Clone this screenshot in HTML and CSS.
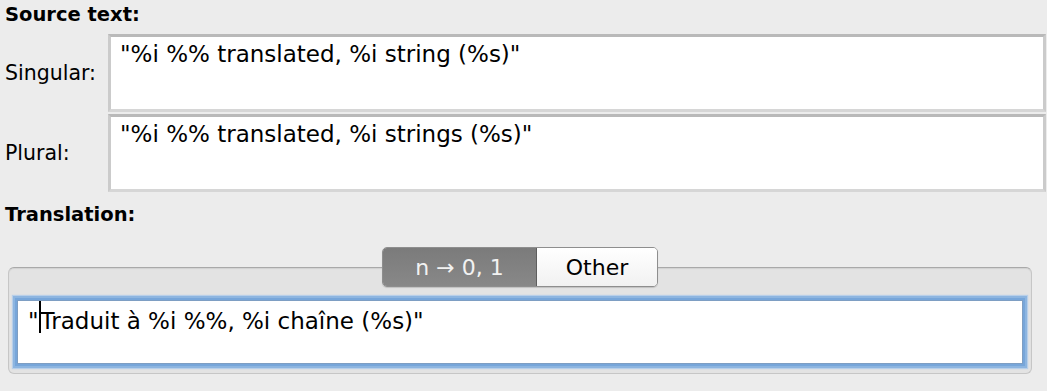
FILE: index.html
```html
<!DOCTYPE html>
<html lang="en">
<head>
  <meta charset="UTF-8">
  <title>Plural translation</title>
  <link rel="stylesheet" href="styles.css">
</head>
<body>
  <main class="editor">
    <div class="heading">Source text:</div>
    <div class="source-grid">
      <label class="row-label">Singular:</label>
      <div class="source-box">"%i %% translated, %i string (%s)"</div>
      <label class="row-label">Plural:</label>
      <div class="source-box">"%i %% translated, %i strings (%s)"</div>
    </div>

    <div class="heading heading-translation">Translation:</div>
    <div class="group">
      <div class="segments">
        <button class="segment selected">n → 0, 1</button>
        <button class="segment">Other</button>
      </div>
      <div class="target-field">
        <span>"</span><span class="caret"></span><span>Traduit à %i %%, %i chaîne (%s)"</span>
      </div>
    </div>
  </main>
</body>
</html>
```

FILE: styles.css
```css
body {
  margin: 0;
  background-color: #ececec;
  font-family: 'DejaVu Sans', sans-serif;
  color: #000;
}

.editor {
  display: flex;
  flex-direction: column;
  padding-top: 3px;
}

.heading {
  font-weight: bold;
  font-size: 19.5px;
  line-height: 24px;
  padding-left: 5px;
}

.heading-translation {
  margin-top: 11px;
}

.source-grid {
  display: grid;
  grid-template-columns: 108px 1fr;
  grid-auto-rows: 78px;
  row-gap: 2px;
  margin-top: 7px;
  padding-right: 1px;
}

.row-label {
  font-size: 20.5px;
  padding-left: 5px;
  align-self: center;
}

.source-box {
  background: #fff;
  border: 3px solid #cbcbcb;
  border-top-color: #b9b9b9;
  border-bottom-color: #d6d6d6;
  font-size: 23px;
  padding: 4px 9px;
}

.group {
  display: flex;
  flex-direction: column;
  align-items: center;
  margin: 40px 15px 0 8px;
  background: #e3e3e3;
  border: 1px solid #c6c6c6;
  border-top-color: #a9a9a9;
  border-radius: 6px;
  box-shadow: inset 0 1px 1px rgba(0, 0, 0, 0.08);
  height: 105px;
}

.segments {
  display: flex;
  margin-top: -21px;
  border: 1px solid #8e8e8e;
  border-radius: 5px;
  overflow: hidden;
  box-shadow: 0 1px 1px rgba(0, 0, 0, 0.15);
}

.segment {
  font-family: inherit;
  font-size: 22px;
  height: 38px;
  width: 120px;
  border: 0;
  padding: 0;
  background: linear-gradient(#ffffff, #f1f1f1);
  color: #000;
}

.segment.selected {
  width: 154px;
  background: linear-gradient(#7b7b7b, #888888);
  color: #f2f2f2;
  border-right: 1px solid #5e5e5e;
}

.target-field {
  align-self: stretch;
  margin: 13px 8px 0 8px;
  height: 64px;
  background: #fff;
  border: 1px solid #7e9ec3;
  box-shadow: 0 0 0 2px #77a6da, 0 0 0 4px #8db5e0, 0 0 1px 5px #b8cfe9;
  font-size: 23px;
  padding: 7px 10px 5px;
  box-sizing: border-box;
  display: flex;
  align-items: flex-start;
}

.caret {
  width: 2px;
  height: 32px;
  background: #000;
  margin-top: -7px;
}
```
